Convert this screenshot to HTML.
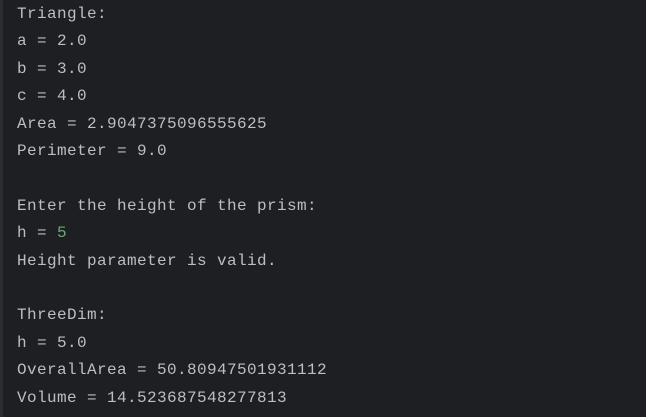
<!DOCTYPE html>
<html><head><style>
html,body{margin:0;padding:0;background:#1e1f22;width:646px;height:417px;overflow:hidden}
.l{position:absolute;left:0;top:0;width:3px;height:417px;background:#2b2d30}
pre{margin:0;position:absolute;left:17px;top:1px;font-family:"Liberation Mono",monospace;font-size:16px;letter-spacing:0.4px;line-height:27.4px;color:#bcbec4}
.g{color:#6aab73}
</style></head><body><div class="l"></div>
<pre>Triangle:
a = 2.0
b = 3.0
c = 4.0
Area = 2.9047375096555625
Perimeter = 9.0

Enter the height of the prism:
h = <span class="g">5</span>
Height parameter is valid.

ThreeDim:
h = 5.0
OverallArea = 50.80947501931112
Volume = 14.523687548277813</pre>
</body></html>
